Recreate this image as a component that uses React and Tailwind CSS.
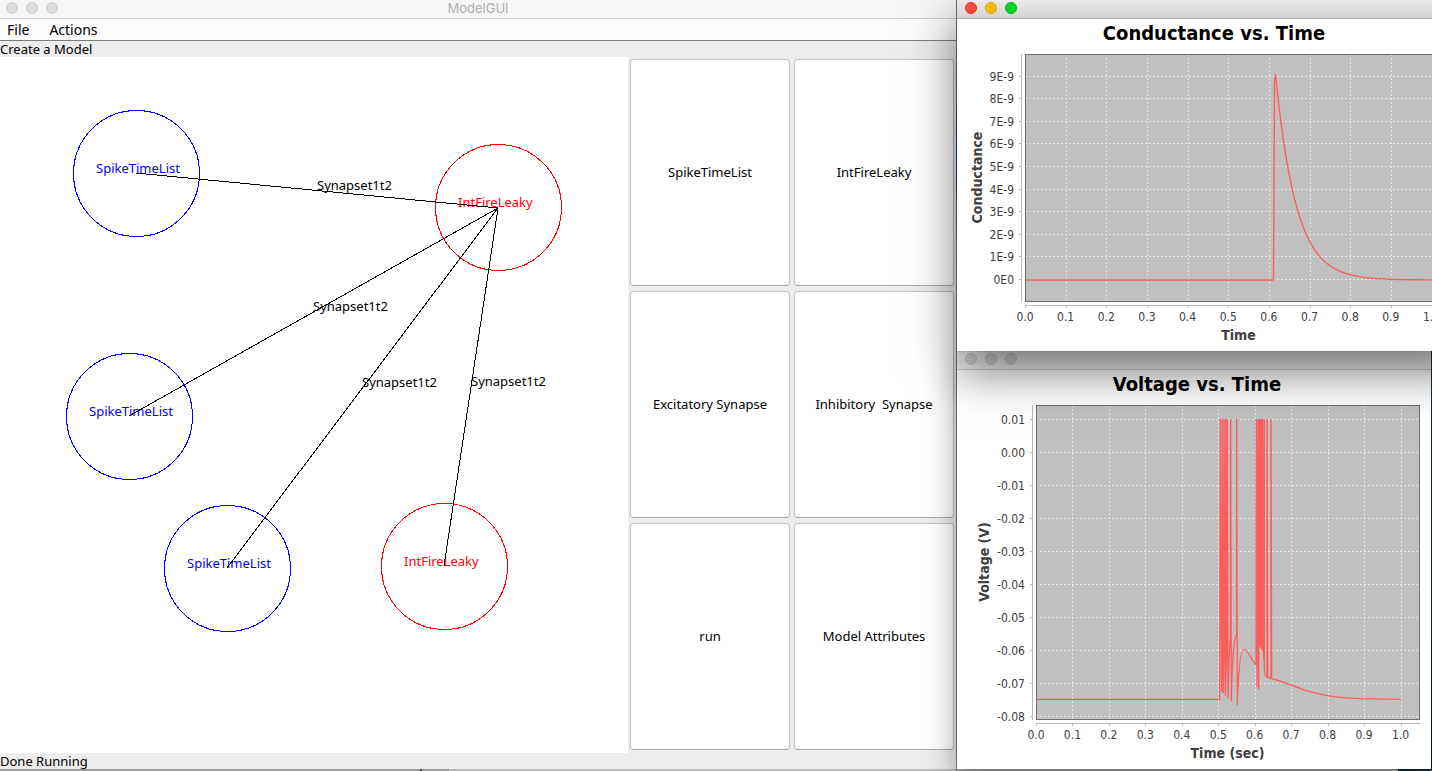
import React from "react";

const BLUE = "#0000ff";
const RED = "#ff0000";

const nodes = [
  { label: "SpikeTimeList", x: 136, y: 116, color: BLUE },
  { label: "IntFireLeaky", x: 498, y: 150, color: RED },
  { label: "SpikeTimeList", x: 129, y: 359, color: BLUE },
  { label: "SpikeTimeList", x: 227, y: 511, color: BLUE },
  { label: "IntFireLeaky", x: 444, y: 509, color: RED },
];

const synapses = [
  { from: 0, to: 1 },
  { from: 2, to: 1 },
  { from: 3, to: 1 },
  { from: 4, to: 1 },
];

const actions = [
  "SpikeTimeList",
  "IntFireLeaky",
  "Excitatory Synapse",
  "Inhibitory  Synapse",
  "run",
  "Model Attributes",
];

function TrafficLights({ active }) {
  const colors = active
    ? ["bg-[#ff4a41] border-[#e0302a]", "bg-[#ffbd05] border-[#dfa010]", "bg-[#00d42b] border-[#10b020]"]
    : ["bg-[#dcdcdc] border-[#cccccc]", "bg-[#dcdcdc] border-[#cccccc]", "bg-[#dcdcdc] border-[#cccccc]"];
  const names = ["Close", "Minimize", "Zoom"];
  return (
    <div className="flex gap-2">
      {colors.map((c, i) => (
        <button key={names[i]} aria-label={names[i]} className={"h-3 w-3 rounded-full border " + c} />
      ))}
    </div>
  );
}

function ModelCanvas() {
  return (
    <svg className="min-h-0 w-full flex-1 bg-white" role="img" aria-label="Network model">
      <g fontFamily="'Noto Sans', sans-serif" fontSize="13">
        {nodes.map((n, i) => (
          <g key={i}>
            <circle cx={n.x + 0.5} cy={n.y + 0.5} r="63" fill="none" stroke={n.color} shapeRendering="crispEdges" />
            <text x={n.x - 40} y={n.y} fill={n.color}>{n.label}</text>
          </g>
        ))}
        {synapses.map((s, i) => {
          const a = nodes[s.from];
          const b = nodes[s.to];
          return (
            <g key={i}>
              <line x1={a.x} y1={a.y} x2={b.x} y2={b.y + 1} stroke="#000" shapeRendering="crispEdges" />
              <text x={Math.floor((a.x + b.x) / 2)} y={Math.floor((a.y + b.y) / 2)}>Synapset1t2</text>
            </g>
          );
        })}
      </g>
    </svg>
  );
}

function Chart({ width, height, plot, title, titleX, xLabel, yLabel, yLabelX, xStep, xTicks, yTicks, children }) {
  const { left, top, right, bottom } = plot;
  const axisX = left - 4;
  const axisY = bottom + 4;
  const midX = (left + right) / 2;
  const midY = (top + bottom) / 2;
  return (
    <svg
      width={width}
      height={height}
      className="block bg-white"
      role="img"
      aria-label={title}
      fontFamily="'DejaVu Sans Condensed', 'DejaVu Sans', sans-serif"
    >
      <text x={titleX} y="21" fontSize="20" fontWeight="700" textAnchor="middle">{title}</text>
      <rect x={left} y={top} width={right - left} height={bottom - top} fill="#c0c0c0" />
      <g stroke="#e6e6e6" strokeDasharray="2 2" shapeRendering="crispEdges">
        {xTicks.map((t, i) => {
          const x = Math.round(left + i * xStep) + 0.5;
          return <line key={t} x1={x} x2={x} y1={top} y2={bottom} />;
        })}
        {yTicks.map(([t, y]) => <line key={t} x1={left} x2={right} y1={y + 0.5} y2={y + 0.5} />)}
      </g>
      {children}
      <rect x={left + 0.5} y={top + 0.5} width={right - left} height={bottom - top} fill="none" stroke="#707070" />
      <g stroke="#b8b8b8" shapeRendering="crispEdges">
        <line x1={axisX + 0.5} x2={axisX + 0.5} y1={top} y2={bottom + 1} />
        <line x1={left} x2={right + 1} y1={axisY + 0.5} y2={axisY + 0.5} />
        {xTicks.map((t, i) => {
          const x = Math.round(left + i * xStep) + 0.5;
          return <line key={t} x1={x} x2={x} y1={axisY} y2={axisY + 3} />;
        })}
        {yTicks.map(([t, y]) => <line key={t} x1={axisX - 2} x2={axisX} y1={y + 0.5} y2={y + 0.5} />)}
      </g>
      <g fontSize="12" fill="#404040">
        {xTicks.map((t, i) => (
          <text key={t} x={left + i * xStep} y={axisY + 16} textAnchor="middle">{t}</text>
        ))}
        {yTicks.map(([t, y]) => (
          <text key={t} x={axisX - 7} y={y + 5} textAnchor="end">{t}</text>
        ))}
      </g>
      <g fontSize="14" fontWeight="700" fill="#404040" textAnchor="middle">
        <text x={midX} y={axisY + 35}>{xLabel}</text>
        <text transform={`translate(${yLabelX} ${midY}) rotate(-90)`}>{yLabel}</text>
      </g>
    </svg>
  );
}

const tenths = ["0.0", "0.1", "0.2", "0.3", "0.4", "0.5", "0.6", "0.7", "0.8", "0.9", "1.0"];

const conductanceTicks = Array.from({ length: 10 }, (_, i) => [
  i === 0 ? "0E0" : `${i}E-9`,
  Math.round(260 - i * 22.6),
]);

const voltageTicks = Array.from({ length: 10 }, (_, i) => [
  (0.01 - i * 0.01).toFixed(2),
  49 + i * 33,
]);

function conductancePath() {
  let d = "M68 261H316.5L317.5 64L318.5 55.5";
  for (let x = 320; x <= 494; x += 2) {
    d += `L${x} ${(261 - 206 * Math.exp(-(x - 318.5) / 20.4)).toFixed(1)}`;
  }
  return d;
}

/* Membrane potential, traced on a grid of thirds of a pixel */
const voltagePath = [
  "M-460 898H89L91 57L95 875",
  "Q96 790 97 750V57L100 880",
  "Q101 790 102 745V57L106 887",
  "Q108 790 109 720L107 57L106 887Q110 750 112 715V57L114 895",
  "Q118 740 121 718L122 57L124 904",
  "Q128 715 140 703V57L142 915",
  "C144 850 148 748 162 748C172 748 182 775 198 795",
  "L199 57L201 862L204 57L206 868L208 57L210 742L212 57L214 745L215 57L217 752",
  "L218 57L221 780L223 57V800Q224 828 228 828L231 832V57L233 832L243 836V57L245 836",
  "C268 842 286 849 303 855C322 862 340 870 360 875C385 882 405 886 430 890",
  "C455 893 480 895 510 896L632 898",
].join("");

function ChartWindow({ title, active, className, children }) {
  return (
    <section aria-label={title} className={"relative shrink-0 " + className}>
      <header
        className={
          "flex h-[19px] items-start border-b px-2 pt-[2px] " +
          (active
            ? "border-[#b0b0b0] bg-linear-to-b from-[#ebebeb] to-[#d3d3d3]"
            : "border-[#d1d1d1] bg-[#f6f6f6]")
        }
      >
        <TrafficLights active={active} />
      </header>
      {children}
    </section>
  );
}

export default function App() {
  return (
    <div className="flex h-screen overflow-hidden bg-linear-to-b from-[#2c3350] from-60% to-[#10182c] font-['Noto_Sans',sans-serif] text-[13px] text-black">
      <main className="flex min-w-0 flex-1 flex-col">
        <header className="grid h-[19px] shrink-0 grid-cols-[1fr_auto_1fr] items-start border-b border-[#cfcfcf] bg-[#f6f6f6]">
          <div className="px-[6px] pt-[2px]">
            <TrafficLights active={false} />
          </div>
          <h1 className="font-['Inter',sans-serif] leading-[17px] text-[#b0b0b0]">ModelGUI</h1>
        </header>
        <nav className="flex h-[22px] shrink-0 items-center gap-5 border-b border-[#7d7d7d] bg-[#fbfbfb] px-[7px] text-[14px]">
          <button>File</button>
          <button>Actions</button>
        </nav>
        <p className="h-4 shrink-0 bg-[#ededed] leading-4">Create a Model</p>
        <div className="flex min-h-0 flex-1 bg-[#ededed]">
          <div className="flex min-w-0 flex-1">
            <ModelCanvas />
          </div>
          <div className="grid w-[328px] shrink-0 grid-cols-2 grid-rows-3 gap-x-1 gap-y-[5px] px-[2px] pt-[2px] pb-[3px]">
            {actions.map((a) => (
              <button
                key={a}
                className="rounded-[4px] border border-[#c2c2c2] border-b-[#a6a6a6] bg-white whitespace-pre"
              >
                {a}
              </button>
            ))}
          </div>
        </div>
        <footer className="h-4 shrink-0 bg-[#ededed] leading-4">Done Running</footer>
        <div className="flex h-[2px] shrink-0">
          <div className="flex-1 bg-[#9c9c9c]" />
          <div className="w-[2px] bg-[#404040]" />
          <div className="w-[27px] bg-[#9c9c9c]" />
          <div className="w-[507px] bg-[#bdbdbd]" />
        </div>
      </main>
      <div className="w-px shrink-0 bg-linear-to-b from-[#7a7a7a] from-8% via-[#1d4a80] via-20% to-[#8a8a8a] to-35%" />
      <div className="flex w-[475px] shrink-0 flex-col">
        <ChartWindow
          title="Conductance vs. Time"
          active
          className="z-10 w-[514px] shadow-[0_20px_45px_rgba(0,0,0,0.55),0_0_1px_rgba(0,0,0,0.4)]"
        >
          <Chart
            width={514}
            height={332}
            plot={{ left: 68, top: 35, right: 495, bottom: 282 }}
            title="Conductance vs. Time"
            titleX={257}
            xLabel="Time"
            yLabel="Conductance"
            yLabelX={25}
            xStep={40.65}
            xTicks={tenths}
            yTicks={conductanceTicks}
          >
            <path d={conductancePath()} fill="none" stroke="#ff5c5c" strokeWidth="1.4" strokeLinejoin="round" />
          </Chart>
        </ChartWindow>
        <ChartWindow
          title="Voltage vs. Time"
          active={false}
          className="w-[474px] shadow-[0_10px_30px_rgba(0,0,0,0.4),0_0_1px_rgba(0,0,0,0.4)]"
        >
          <Chart
            width={474}
            height={399}
            plot={{ left: 79, top: 35, right: 462, bottom: 349 }}
            title="Voltage vs. Time"
            titleX={240}
            xLabel="Time (sec)"
            yLabel="Voltage (V)"
            yLabelX={32}
            xStep={36.45}
            xTicks={tenths}
            yTicks={voltageTicks}
          >
            <g transform="translate(233 30) scale(0.33333)">
              <path d={voltagePath} fill="none" stroke="#ff5c5c" strokeWidth="4" strokeLinejoin="bevel" />
            </g>
          </Chart>
        </ChartWindow>
        <div className="flex flex-1">
          <div className="flex-1 bg-[#b0b0b0]" />
          <div className="w-[34px] bg-[#1c2a44]" />
        </div>
      </div>
    </div>
  );
}
